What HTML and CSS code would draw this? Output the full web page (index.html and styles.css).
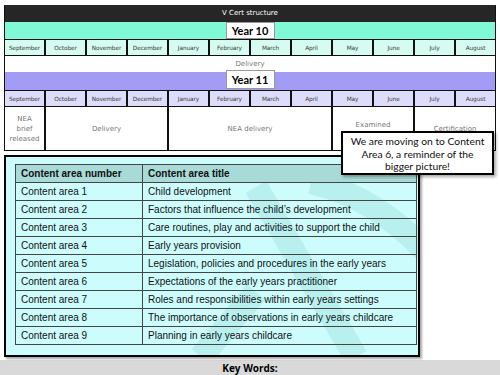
FILE: index.html
```html
<!DOCTYPE html>
<html>
<head>
<meta charset="utf-8">
<link rel="stylesheet" href="styles.css">
</head>
<body>
<div class="page">
  <div class="timeline">
    <div class="title">V Cert structure</div>
    <div class="year-bar green"><span class="year">Year 10</span></div>
    <div class="months mint">
      <span>September</span><span>October</span><span>November</span><span>December</span><span>January</span><span>February</span><span>March</span><span>April</span><span>May</span><span>June</span><span>July</span><span>August</span>
    </div>
    <div class="delivery">Delivery</div>
    <div class="year-bar purple"><span class="year up">Year 11</span></div>
    <div class="months lav">
      <span>September</span><span>October</span><span>November</span><span>December</span><span>January</span><span>February</span><span>March</span><span>April</span><span>May</span><span>June</span><span>July</span><span>August</span>
    </div>
    <div class="phases">
      <span class="p1">NEA<br>brief<br>released</span>
      <span class="p3">Delivery</span>
      <span class="p4">NEA delivery</span>
      <span class="p2 top">Examined</span>
      <span class="p2">Certification</span>
    </div>
  </div>

  <div class="content-box">
    <svg class="watermark" width="412" height="198" viewBox="0 0 412 198">
      <path d="M250 30 L350 200" />
      <path d="M305 25 Q370 40 420 95" />
      <path d="M250 135 L195 200" />
    </svg>
    <table class="areas">
      <thead>
        <tr><th>Content area number</th><th>Content area title</th></tr>
      </thead>
      <tbody>
        <tr><td>Content area 1</td><td>Child development</td></tr>
        <tr><td>Content area 2</td><td>Factors that influence the child’s development</td></tr>
        <tr><td>Content area 3</td><td>Care routines, play and activities to support the child</td></tr>
        <tr><td>Content area 4</td><td>Early years provision</td></tr>
        <tr><td>Content area 5</td><td>Legislation, policies and procedures in the early years</td></tr>
        <tr><td>Content area 6</td><td>Expectations of the early years practitioner</td></tr>
        <tr><td>Content area 7</td><td>Roles and responsibilities within early years settings</td></tr>
        <tr><td>Content area 8</td><td>The importance of observations in early years childcare</td></tr>
        <tr><td>Content area 9</td><td>Planning in early years childcare</td></tr>
      </tbody>
    </table>
  </div>

  <div class="footer">Key Words:</div>

  <div class="callout">We are moving on to Content Area 6, a reminder of the bigger picture!</div>
</div>
</body>
</html>
```

FILE: styles.css
```css
* { box-sizing: border-box; }
html, body { margin: 0; padding: 0; background: #fff; }
.page {
  position: relative;
  width: 500px;
  height: 375px;
  overflow: hidden;
  padding-top: 5px;
}
.timeline {
  margin: 0 4px;
  border-left: 1px solid #111;
  border-right: 1px solid #111;
  font-family: "DejaVu Sans", sans-serif;
}
.title {
  height: 17px;
  background: #262626;
  color: #fff;
  font-size: 7px;
  line-height: 17px;
  text-align: center;
}
.year-bar {
  height: 17px;
  display: flex;
  justify-content: center;
  align-items: flex-start;
}
.green { background: #80f9d7; }
.purple { background: #a39cf4; height: 18px; }
.year {
  width: 49px;
  height: 17px;
  background: #fff;
  border: 1px solid #999;
  font-family: Lato, sans-serif;
  font-weight: bold;
  font-size: 11px;
  line-height: 15px;
  text-align: center;
  color: #000;
}
.year.up { margin-top: -2px; height: 19px; line-height: 18px; }
.months {
  display: grid;
  grid-template-columns: repeat(12, 1fr);
  gap: 2px;
  background: #111;
  padding: 1px 0;
  height: 17px;
}
.months span {
  font-size: 5.8px;
  color: #3a3a3a;
  display: flex;
  align-items: center;
  justify-content: center;
  letter-spacing: -0.1px;
}
.mint span { background: #d6fbf0; }
.lav span { background: #dddcfb; }
.delivery {
  height: 16px;
  background: #fff;
  color: #777;
  font-size: 7px;
  line-height: 16px;
  text-align: center;
}
.phases {
  display: grid;
  grid-template-columns: repeat(12, 1fr);
  gap: 2px;
  background: #111;
  padding-bottom: 1px;
  height: 44px;
}
.phases span {
  background: #fff;
  color: #777;
  font-size: 7px;
  line-height: 10px;
  display: flex;
  align-items: center;
  justify-content: center;
  text-align: center;
}
.phases .top { align-items: flex-start; padding-top: 13px; }
.p1 { grid-column: span 1; }
.p2 { grid-column: span 2; }
.p3 { grid-column: span 3; }
.p4 { grid-column: span 4; }

.content-box {
  position: relative;
  margin: 4px 0 0 4px;
  width: 416px;
  height: 202px;
  border: 2px solid #000;
  background: #ccfcfc;
  box-shadow: 2px 2px 2px rgba(0,0,0,0.35);
  padding: 7px 0 0 9px;
}
.watermark {
  position: absolute;
  left: 0;
  top: 0;
}
.watermark path {
  fill: none;
  stroke: #b8f0f0;
  stroke-width: 24;
}
.areas {
  position: relative;
  border-collapse: collapse;
  width: 402px;
  font-family: "Liberation Sans", Arial, sans-serif;
  font-size: 10px;
  color: #111;
  border: 1px solid #333;
}
.areas th, .areas td {
  border: 1px solid #444;
  height: 18px;
  padding: 0 0 0 5px;
  text-align: left;
  vertical-align: middle;
  line-height: 12px;
}
.areas th { background: #a8dad7; font-weight: bold; }
.areas th:first-child, .areas td:first-child { width: 127px; }
.footer {
  margin-top: 3px;
  height: 17px;
  background: #d9d9d9;
  font-family: "Open Sans", sans-serif;
  font-weight: bold;
  font-size: 10px;
  line-height: 17px;
  text-align: center;
  color: #000;
}
.callout {
  position: absolute;
  left: 341px;
  top: 131px;
  width: 153px;
  height: 44px;
  background: #fff;
  border: 2px solid #000;
  box-shadow: 2px 2px 3px rgba(0,0,0,0.35);
  font-family: Lato, sans-serif;
  font-size: 10.3px;
  line-height: 12.5px;
  text-align: center;
  color: #111;
  padding: 2px 7px 0;
}
```
